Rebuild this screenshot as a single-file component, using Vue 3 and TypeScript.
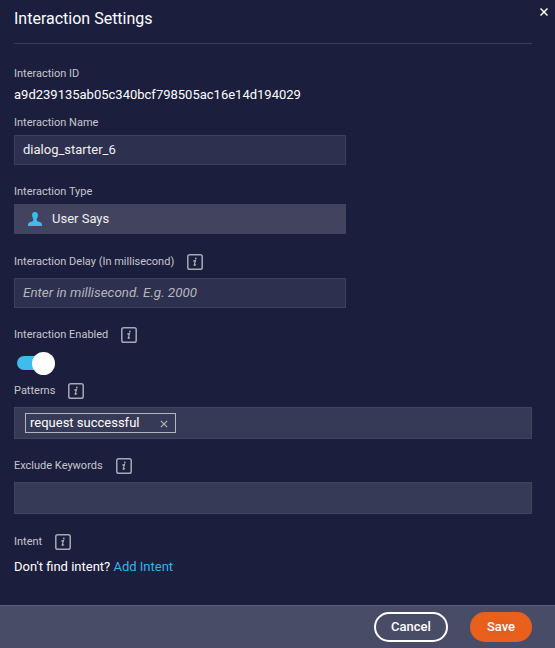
<script setup lang="ts">
import { defineComponent, h, ref } from 'vue'

const InfoIcon = defineComponent({
  render: () =>
    h('svg', { width: 16, height: 16, viewBox: '0 0 16 16', fill: 'none' }, [
      h('rect', { x: 0.8, y: 0.8, width: 14.4, height: 14.4, rx: 1.8, stroke: '#a7a9b3', 'stroke-width': 1.5 }),
      h('path', {
        d: 'M6.3 7.1L8.5 6.5L7.2 11.1Q7.1 11.8 9 10.5',
        stroke: '#a7a9b3',
        'stroke-width': 1.25,
      }),
      h('circle', { cx: 8.8, cy: 4.4, r: 0.85, fill: '#a7a9b3' }),
    ]),
})

const interactionId = 'a9d239135ab05c340bcf798505ac16e14d194029'
const name = ref('dialog_starter_6')
const delay = ref('')
const enabled = ref(true)
const patterns = ref<string[]>(['request successful'])

function removePattern(index: number): void {
  patterns.value.splice(index, 1)
}
</script>

<template>
  <div class="panel">
    <header class="header">
      <h1>Interaction Settings</h1>
      <button class="close" aria-label="Close">
        <svg width="8" height="8" viewBox="0 0 8 8"><path d="M.5 .5L7.5 7.5M7.5 .5L.5 7.5" stroke="#fff" stroke-width="1.5" /></svg>
      </button>
    </header>

    <main class="body">
      <div class="label id-label"><span>Interaction ID</span></div>
      <div class="value">{{ interactionId }}</div>

      <div class="label name-label"><span>Interaction Name</span></div>
      <input v-model="name" class="input" type="text" />

      <div class="label type-label"><span>Interaction Type</span></div>
      <div class="select">
        <svg width="14" height="14" viewBox="0 0 14 14" fill="#3fbcee">
          <path d="M7 0C8.9 0 9.9 1.1 9.9 3.1C9.9 4.9 9.3 6 8.7 6.8V8.5C9.5 9.5 11.7 9.8 13 10.7C13.8 11.3 14 12.5 14 14H0C0 12.5.2 11.3 1 10.7C2.3 9.8 4.5 9.5 5.3 8.5V6.8C4.7 6 4.1 4.9 4.1 3.1C4.1 1.1 5.1 0 7 0Z" />
        </svg>
        <span>User Says</span>
      </div>

      <div class="label with-info delay-label"><span>Interaction Delay (In millisecond)</span><InfoIcon /></div>
      <input v-model="delay" class="input" type="text" placeholder="Enter in millisecond. E.g. 2000" />

      <div class="label with-info enabled-label"><span>Interaction Enabled</span><InfoIcon /></div>
      <button class="toggle" :class="{ on: enabled }" role="switch" :aria-checked="enabled" @click="enabled = !enabled">
        <span class="knob"></span>
      </button>

      <div class="label with-info patterns-label"><span>Patterns</span><InfoIcon /></div>
      <div class="tags">
        <div v-for="(p, i) in patterns" :key="p" class="tag">
          <span>{{ p }}</span>
          <button aria-label="Remove" @click="removePattern(i)">
            <svg width="8" height="8" viewBox="0 0 8 8"><path d="M.8 .8L7.2 7.2M7.2 .8L.8 7.2" stroke="#b4b5be" stroke-width="1.1" /></svg>
          </button>
        </div>
      </div>

      <div class="label with-info keywords-label"><span>Exclude Keywords</span><InfoIcon /></div>
      <div class="tags"></div>

      <div class="label with-info intent-label"><span>Intent</span><InfoIcon /></div>
      <p class="intent">Don't find intent? <a>Add Intent</a></p>
    </main>

    <footer class="footer">
      <button class="btn cancel">Cancel</button>
      <button class="btn save">Save</button>
    </footer>
  </div>
</template>

<style>
body {
  background: #1b1e3d;
}
</style>

<style scoped>
.panel {
  box-sizing: border-box;
  width: 555px;
  height: 648px;
  display: flex;
  flex-direction: column;
  background: #1b1e3d;
  color: #fff;
  font-family: Roboto, "Liberation Sans", sans-serif;
  font-size: 13px;
  overflow: hidden;
}
.panel * {
  box-sizing: border-box;
}
button {
  border: 0;
  padding: 0;
  background: none;
  font: inherit;
  color: inherit;
  cursor: pointer;
}
svg {
  display: block;
  flex: none;
}
.header {
  display: flex;
  justify-content: space-between;
  align-items: flex-start;
  height: 44px;
  margin: 0 7px 0 14px;
  flex: none;
}
h1 {
  margin: 0;
  width: 518px;
  height: 44px;
  border-bottom: 1px solid #3a3c59;
  font-size: 16px;
  font-weight: 400;
  line-height: 37px;
}
.close {
  margin-top: 8px;
}
.body {
  flex: 1;
  padding: 0 23px 0 14px;
}
.label {
  display: flex;
  align-items: center;
  gap: 13px;
  height: 16px;
  font-size: 11px;
  color: #c6c7cf;
}
.with-info span {
  padding-bottom: 2px;
}
.id-label { margin-top: 21px; }
.value {
  margin-top: 6px;
  height: 16px;
  line-height: 16px;
}
.name-label { margin: 11px 0 5px; }
.type-label { margin: 18px 0 5px; }
.delay-label { margin: 20px 0 8px; }
.enabled-label { margin: 19px 0 9px; }
.patterns-label { margin: 8px 0 8px; }
.keywords-label { margin: 19px 0 8px; }
.intent-label { margin: 20px 0 9px; }
.input {
  display: block;
  width: 332px;
  height: 30px;
  padding: 0 8px 2px;
  border: 1px solid #3d3f5b;
  border-radius: 0;
  outline: none;
  background: #2d304e;
  color: #f0f0f3;
  font: inherit;
}
.input::placeholder {
  color: #b6b7bd;
  font-size: 13.4px;
  font-style: italic;
  opacity: 1;
}
.select {
  display: flex;
  align-items: center;
  gap: 10px;
  width: 332px;
  height: 30px;
  padding-left: 14px;
  background: #41435f;
  color: #f0f0f3;
}
.select span {
  padding-bottom: 2px;
}
.toggle {
  display: flex;
  align-items: center;
  width: 38px;
  height: 23px;
  margin-left: 3px;
  background: linear-gradient(#666982, #666982) left center / 100% 14px no-repeat;
  border-radius: 12px;
}
.toggle.on {
  justify-content: flex-end;
  background: none;
}
.toggle.on::before {
  content: "";
  width: 26px;
  height: 14px;
  margin: 0 -11px 1px 0;
  border-radius: 7px;
  background: #3fbcee;
}
.knob {
  width: 23px;
  height: 23px;
  border-radius: 50%;
  background: #fff;
}
.tags {
  display: flex;
  align-items: center;
  height: 32px;
  padding-left: 10px;
  border: 1px solid #41435f;
  background: #373a56;
}
.tag {
  display: flex;
  align-items: center;
  justify-content: space-between;
  width: 151px;
  height: 20px;
  padding: 0 7px 0 4px;
  border: 1px solid #b4b5be;
}
.tag span {
  line-height: 18px;
}
.tag button {
  margin-top: 2px;
}
.intent {
  margin: 0;
  height: 16px;
  line-height: 16px;
}
.intent a {
  color: #38b3e8;
}
.footer {
  display: flex;
  justify-content: flex-end;
  align-items: flex-start;
  gap: 22px;
  height: 43px;
  padding: 6px 23px 0;
  flex: none;
  border-top: 1px solid #5d5f7a;
  background: #494c66;
}
.btn {
  height: 30px;
  border-radius: 15px;
  padding-bottom: 2px;
  font-size: 13px;
  font-weight: 500;
}
.cancel {
  width: 74px;
  border: 2px solid #fff;
}
.save {
  width: 62px;
  background: radial-gradient(#dd5d20, #e9601c 55%);
}
</style>
